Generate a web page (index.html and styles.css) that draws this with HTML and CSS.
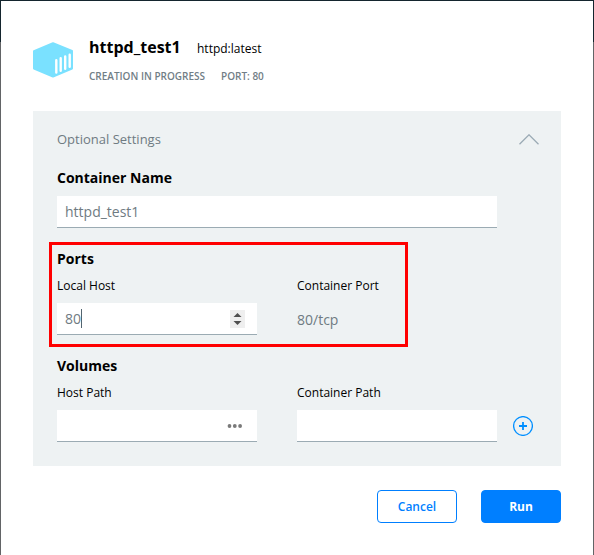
FILE: index.html
```
<!DOCTYPE html>
<html lang="en">
<head>
<meta charset="utf-8">
<title>Container Settings</title>
<link rel="stylesheet" href="styles.css">
</head>
<body>
<main class="dialog">
  <header class="header">
    <svg class="logo" width="42" height="38" viewBox="0 0 42 38">
      <path d="M20 2.200L39 10V27.500L20 35.500L1 27.500V10.200Z" fill="#7ae1ff" stroke="#7ae1ff" stroke-width="2" stroke-linejoin="round"/>
      <path d="M23.300 19.200V31.500M27.700 17.300V29.700M32.200 15.500V27.800M36.700 13.700V25.800" stroke="#fff" stroke-width="2.400" stroke-linecap="round"/>
    </svg>
    <div class="heading">
      <div class="title-row"><h1 class="title">httpd_test1</h1><span class="image">httpd:latest</span></div>
      <div class="status-row"><span class="status">CREATION IN PROGRESS</span><span class="port">PORT: 80</span></div>
    </div>
  </header>
  <section class="panel">
    <div class="panel-head">
      <span class="optional">Optional Settings</span>
      <svg width="20" height="11" viewBox="0 0 20 11"><path d="M.5 10.300L10 .8L19.500 10.300" fill="none" stroke="#9baab5" stroke-width="1.300"/></svg>
    </div>
    <div class="group name-group">
      <h2 class="section-title">Container Name</h2>
      <div class="field"><span class="value">httpd_test1</span></div>
    </div>
    <div class="group ports-group">
      <h2 class="section-title">Ports</h2>
      <div class="columns">
        <span class="label">Local Host</span><span class="label">Container Port</span>
        <div class="field"><span class="value">80</span><i class="caret"></i>
          <svg class="spinner" width="15" height="18" viewBox="0 0 15 18"><path d="M0 0H15V18H0Z" fill="#efefef"/><path d="M7.500 3L11.500 7H3.500ZM7.500 15L3.500 11H11.500Z" fill="#505050"/></svg>
        </div>
        <span class="value protocol">80/tcp</span>
      </div>
    </div>
    <div class="group volumes-group">
      <h2 class="section-title">Volumes</h2>
      <div class="columns">
        <span class="label">Host Path</span><span class="label">Container Path</span>
        <div class="field"><svg class="dots" width="16" height="4" viewBox="0 0 16 4"><g fill="#7a7a7a"><circle cx="2.500" cy="2" r="1.900"/><circle cx="7.800" cy="2" r="1.900"/><circle cx="13.100" cy="2" r="1.900"/></g></svg></div>
        <div class="field"></div>
        <svg class="add" width="20" height="20" viewBox="0 0 20 20" fill="none" stroke="#008fff"><circle cx="10" cy="10" r="9.400" stroke-width="1.300"/><path d="M6 10H14M10 6V14" stroke-width="1.800"/></svg>
      </div>
    </div>
  </section>
  <footer class="actions">
    <button class="button cancel">Cancel</button>
    <button class="button run">Run</button>
  </footer>
  <div class="highlight"></div>
</main>
</body>
</html>
```

FILE: styles.css
```
* { box-sizing: border-box; margin: 0; }
body {
  height: 555px;
  padding: 1px 1px 0;
  overflow: hidden;
  font-family: "Open Sans", sans-serif;
  color: #000;
  background: linear-gradient(#14252e 42px, #626466 42px);
}
svg { display: block; flex: none; }
.dialog { position: relative; height: 554px; padding: 0 32px; background: #fff; }
.header { display: flex; height: 110px; padding-top: 35px; }
.logo { margin-top: 5px; }
.heading { padding-left: 14px; }
.title-row { display: flex; align-items: baseline; height: 32px; }
.title { width: 108px; font-size: 16px; line-height: 22px; font-weight: 700; white-space: nowrap; }
.image { font-size: 12px; }
.status-row { display: flex; font-size: 10px; line-height: 16px; color: #717e86; font-weight: 600; }
.status { width: 132px; }
.panel { height: 355px; padding: 0 24px; background: #eef2f3; }
.panel-head { display: flex; justify-content: space-between; height: 57px; padding-top: 23px; }
.panel-head svg { margin-right: -2px; }
.optional { margin-top: -5px; font-size: 13px; line-height: 20px; color: #6f7b82; }
.section-title { font-size: 14px; line-height: 20px; font-weight: 700; }
.field { display: flex; align-items: center; width: 100%; height: 32px; padding: 0 8px; border-bottom: 1px solid #9babb3; background: #fff; }
.value { font-size: 14px; line-height: 20px; color: #6f7b82; }
.name-group { width: 440px; height: 81px; }
.name-group .field { margin-top: 8px; }
.columns { display: grid; grid-template-columns: 200px 200px; grid-template-rows: 26px 32px; column-gap: 40px; margin-top: 8px; }
.label { font-size: 12px; line-height: 18px; }
.ports-group { height: 107px; }
.caret { width: 1px; height: 19px; background: #526570; }
.spinner { margin-left: auto; margin-right: 4px; }
.protocol { padding-top: 7px; }
.dots { margin-left: auto; margin-right: 6px; }
.volumes-group .columns { grid-template-columns: 200px 200px 20px; }
.volumes-group .columns > .field { grid-row: 2; }
.add { grid-row: 2; grid-column: 3; margin: 6px 0 0 -24px; }
.actions { display: flex; justify-content: flex-end; gap: 24px; padding-top: 24px; }
.button { width: 80px; height: 33px; padding: 0; border: 1px solid #007fff; border-radius: 4px; font: 600 12px/18px "Open Sans", sans-serif; }
.cancel { color: #007fff; background: #fff; }
.run { color: #fff; background: #007fff; font-weight: 700; }
.highlight { position: absolute; left: 48px; top: 241px; width: 359px; height: 105px; border: 3px solid #f00; }
```
